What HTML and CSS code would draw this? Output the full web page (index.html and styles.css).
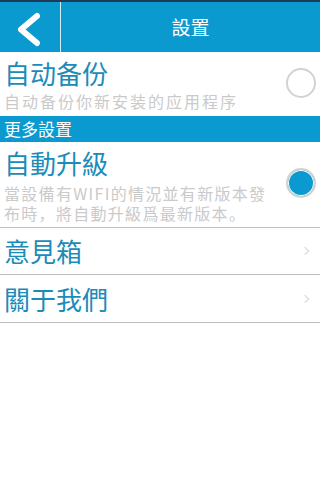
FILE: index.html
```html
<!DOCTYPE html>
<html lang="zh">
<head>
  <meta charset="UTF-8">
  <meta name="viewport" content="width=device-width, initial-scale=1.0">
  <title>設置</title>
  <link rel="stylesheet" href="styles.css">
</head>
<body>

  <!-- Title bar -->
  <div class="topbar">
    <div class="back">
      <svg width="60" height="50" viewBox="0 0 60 50">
        <polyline points="37,14 21,27.5 37,41" fill="none" stroke="#fff" stroke-width="6" stroke-linecap="round" stroke-linejoin="round"/>
      </svg>
    </div>
    <div class="title">設置</div>
  </div>

  <!-- Backup -->
  <div class="row first">
    <div class="text">
      <div class="name sc">自动备份</div>
      <div class="desc sc">自动备份你新安装的应用程序</div>
    </div>
    <span class="radio"></span>
  </div>

  <div class="group">更多設置</div>

  <!-- Auto upgrade -->
  <div class="row upgrade">
    <div class="text">
      <div class="name">自動升級</div>
      <div class="desc lead">當設備有WIFI的情況並有新版本發</div>
      <div class="desc">布時，將自動升級爲最新版本。</div>
    </div>
    <span class="radio on"></span>
  </div>

  <div class="row link">
    <div class="name">意見箱</div>
    <span class="arrow"></span>
  </div>

  <div class="row link">
    <div class="name">關于我們</div>
    <span class="arrow"></span>
  </div>

</body>
</html>
```

FILE: styles.css
```css
/* Settings screen */
body {
  margin: 0;
  background: #fff;
  font-family: "Noto Sans CJK TC", "Noto Sans CJK SC", sans-serif;
}

.topbar {
  display: flex;
  height: 50px;
  background-color: #0b9ad0;
  border-top: 2px solid #1d3b58;
}

.back {
  width: 60px;
  border-right: 1px solid #d8eef7;
}

.back svg {
  display: block;
}

.title {
  flex: 1;
  text-align: center;
  color: #fff;
  font-size: 19px;
  line-height: 50px;
}

.row {
  display: flex;
  align-items: center;
  padding-left: 4px;
}

.text {
  flex: 1;
}

.name {
  color: #1b8cb9;
  font-size: 26px;
  line-height: 34px;
}

.desc {
  color: #cacaca;
  font-size: 16px;
  letter-spacing: 2px;
  white-space: nowrap;
}

.sc {
  font-family: "Noto Sans CJK SC", sans-serif;
}

.first {
  height: 64px;
  padding-top: 4px;
  box-sizing: border-box;
  align-items: flex-start;
}

.first .desc {
  line-height: 22px;
}

.first .radio {
  margin-top: 12px;
}

.group {
  background-color: #0b9ad0;
  color: #fff;
  font-size: 17px;
  line-height: 26px;
  height: 26px;
  padding-left: 4px;
}

.upgrade {
  height: 86px;
  padding-top: 4px;
  box-sizing: border-box;
  align-items: flex-start;
  border-bottom: 1px solid #bdbdbd;
}

.upgrade .desc {
  line-height: 20px;
  letter-spacing: 1.3px;
}

.upgrade .lead {
  margin-top: 3px;
}

.upgrade .radio {
  margin-top: 22px;
}

.radio {
  width: 26px;
  height: 26px;
  border: 2px solid #d2d2d2;
  border-radius: 50%;
  margin-right: 4px;
  flex-shrink: 0;
}

.radio.on {
  background-color: #0b9ad0;
  box-shadow: inset 0 0 0 1px #fff;
}

.link {
  height: 46px;
  border-bottom: 1px solid #bdbdbd;
}

.link + .link {
  height: 47px;
}

.link .name {
  flex: 1;
}

.arrow {
  width: 5px;
  height: 5px;
  border-top: 1px solid #d6d6d6;
  border-right: 1px solid #d6d6d6;
  transform: rotate(45deg);
  margin-right: 12px;
}
```
